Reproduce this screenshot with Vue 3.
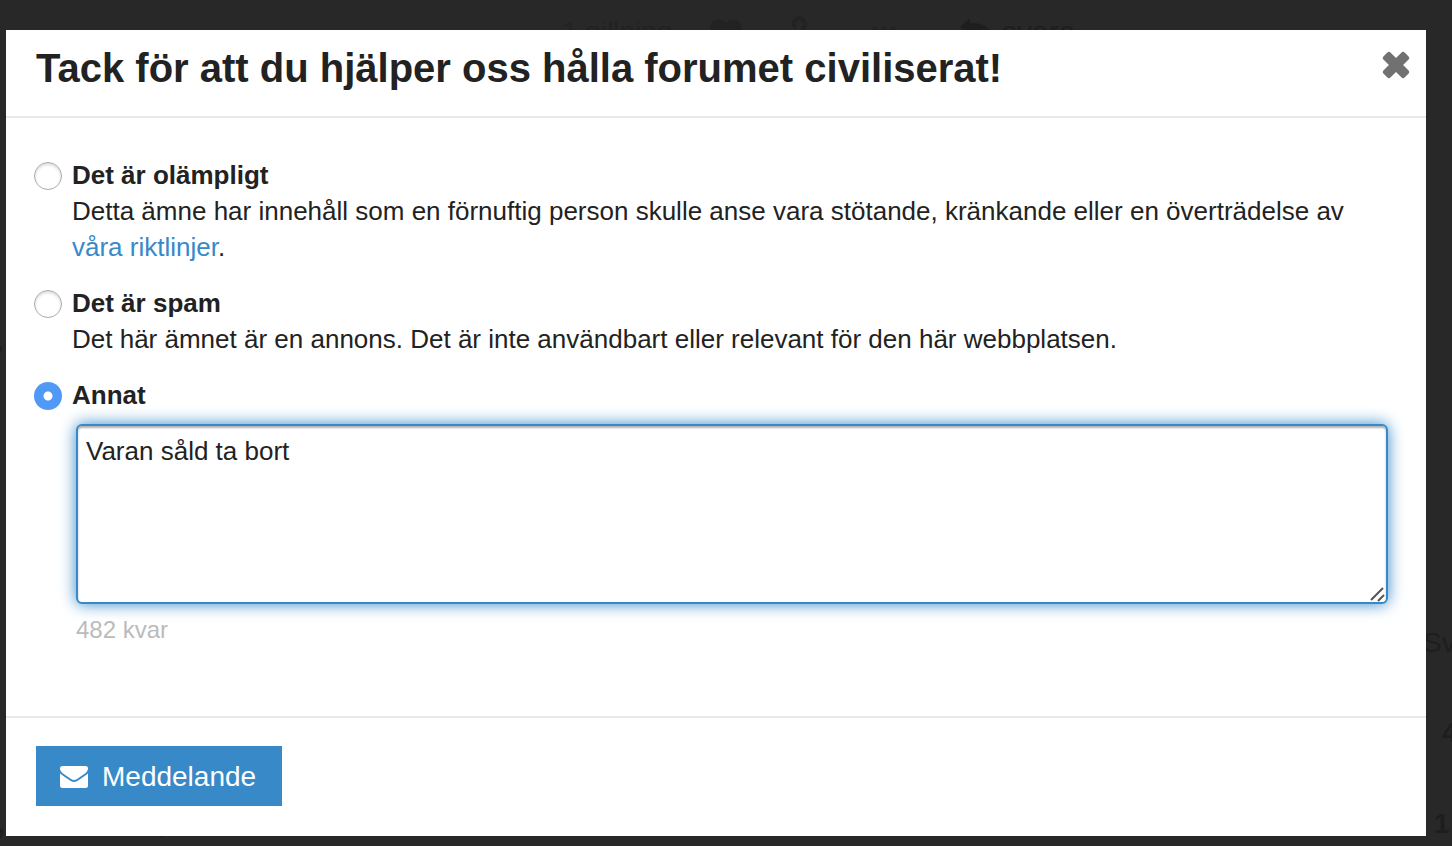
<script setup>
import { computed, ref } from 'vue'

const LIMIT = 500
const reason = ref('other')
const message = ref('Varan såld ta bort')
const remaining = computed(() => LIMIT - message.value.length)
</script>

<template>
  <div class="page">
    <div class="backdrop" aria-hidden="true">
      <span class="ghost likes">1 gillning</span>
      <svg class="ghost heart" width="32" height="28" viewBox="0 0 32 28">
        <path d="M16 27 3 15C-5 5 8-5 16 4c8-9 21 1 13 11z" />
      </svg>
      <svg class="ghost chain" width="20" height="30" viewBox="0 0 20 30">
        <path d="m6 13-2-3a3 3 0 0 1 0-3l3-3a4 4 0 0 1 5 0l3 4a3 3 0 0 1 0 3l-3 4" fill="none" stroke="currentColor" stroke-width="4" />
      </svg>
      <svg class="ghost dots" width="26" height="8" viewBox="0 0 26 8">
        <rect width="6" height="6" rx="2" /><rect x="9" width="6" height="6" rx="2" /><rect x="18" width="6" height="6" rx="2" />
      </svg>
      <svg class="ghost arrow" width="30" height="28" viewBox="0 0 30 28">
        <path d="M0 9 10 0v5c14 0 20 4 20 12 0 4-2 7-4 10 1-9-4-12-16-12v4z" />
      </svg>
      <span class="ghost reply">svara</span>
      <span class="ghost replies">Sv</span>
      <span class="ghost count-a">4</span>
      <span class="ghost count-b">1</span>
      <span class="ghost comma-a">,</span>
      <span class="ghost comma-b">,</span>
      <span class="ghost dot">•</span>
    </div>

    <form class="modal" role="dialog" aria-labelledby="flag-title" @submit.prevent>
      <header class="modal-header">
        <h1 id="flag-title">Tack för att du hjälper oss hålla forumet civiliserat!</h1>
        <button class="close" type="button" aria-label="Stäng">
          <svg width="28" height="28" viewBox="0 0 28 28">
            <g transform="rotate(45 14 14)">
              <rect x="-1" y="9" width="30" height="10" rx="2.500" />
              <rect x="9" y="-1" width="10" height="30" rx="2.500" />
            </g>
          </svg>
        </button>
      </header>

      <div class="modal-body">
        <div class="option">
          <input id="inappropriate" v-model="reason" type="radio" name="reason" value="inappropriate" />
          <div class="copy">
            <label for="inappropriate">Det är olämpligt</label>
            <p>Detta ämne har innehåll som en förnuftig person skulle anse vara stötande, kränkande eller en överträdelse av <a href="#riktlinjer">våra riktlinjer</a>.</p>
          </div>
        </div>
        <div class="option">
          <input id="spam" v-model="reason" type="radio" name="reason" value="spam" />
          <div class="copy">
            <label for="spam">Det är spam</label>
            <p>Det här ämnet är en annons. Det är inte användbart eller relevant för den här webbplatsen.</p>
          </div>
        </div>
        <div class="option">
          <input id="other" v-model="reason" type="radio" name="reason" value="other" />
          <div class="copy">
            <label for="other">Annat</label>
          </div>
        </div>
        <div class="message">
          <div class="field">
            <textarea v-model="message" aria-label="Annat" :maxlength="LIMIT" spellcheck="false"></textarea>
            <svg class="grip" width="16" height="16" viewBox="0 0 16 16" aria-hidden="true">
              <path d="M1 14 13 2M8 15 14 9" fill="none" stroke="currentColor" stroke-width="2" />
            </svg>
          </div>
          <div class="remaining">{{ remaining }} kvar</div>
        </div>
      </div>

      <footer class="modal-footer">
        <button class="submit" type="submit">
          <svg width="28" height="22" viewBox="0 0 28 22" aria-hidden="true">
            <path d="M2.500 0h23A2.500 2.500 0 0 1 28 2.500C28 4.700 26.500 6.300 25 7.400l-8 5.500q-3 2.200-6 0L3 7.400C1.500 6.300 0 4.700 0 2.500A2.500 2.500 0 0 1 2.500 0z" />
            <path d="M0 7.200Q.8 8.200 2 9l7.500 5.300q4.500 3.200 9 0L26 9q1.200-.8 2-1.800V19.500A2.500 2.500 0 0 1 25.500 22h-23A2.500 2.500 0 0 1 0 19.500z" />
          </svg>
          Meddelande
        </button>
      </footer>
    </form>
  </div>
</template>

<style>
body {
  margin: 0;
  background: #282828;
}
</style>

<style scoped>
.page {
  position: relative;
  box-sizing: border-box;
  min-height: 100vh;
  padding: 30px 26px 10px 6px;
  overflow: hidden;
  background: #282828;
  color: #222;
  font-family: "Liberation Sans", Arial, sans-serif;
  font-size: 26px;
  line-height: 36px;
}

.backdrop {
  position: absolute;
  inset: 0;
  overflow: hidden;
  color: #1e1e1e;
  font-size: 28px;
}

.ghost {
  position: absolute;
  white-space: nowrap;
}

svg {
  display: block;
  fill: currentColor;
}

.likes { left: 562px; top: 14px; color: #222; }
.heart { left: 710px; top: 19px; color: #222; }
.chain { left: 790px; top: 15px; color: #222; }
.dots { left: 872px; top: 27px; color: #222; }
.arrow { left: 960px; top: 18px; }
.reply { left: 1002px; top: 14px; font-size: 30px; }
.replies { left: 1423px; top: 625px; }
.count-a { left: 1442px; top: 715px; font-weight: bold; }
.count-b { left: 1434px; top: 806px; font-weight: bold; }
.comma-a { left: -3px; top: 806px; font-weight: bold; }
.comma-b { left: 158px; top: 807px; }
.dot { left: -7px; top: 331px; }

.modal {
  position: relative;
  background: #fff;
}

.modal-header {
  display: flex;
  align-items: flex-start;
  justify-content: space-between;
  padding: 14px 16px 24px 30px;
  border-bottom: 2px solid #e9e9e9;
}

h1 {
  margin: 0;
  font-size: 40px;
  line-height: 48px;
}

.close {
  padding: 0;
  margin-top: 7px;
  border: 0;
  background: none;
  color: #717171;
}

.modal-body {
  display: flex;
  flex-direction: column;
  gap: 20px;
  padding: 39px 38px 68px 28px;
}

.option {
  display: flex;
  gap: 10px;
}

input[type="radio"] {
  appearance: none;
  flex: none;
  box-sizing: border-box;
  width: 28px;
  height: 28px;
  margin: 5px 0 0;
  border: 1px solid #aaa;
  border-radius: 50%;
  background: #fff;
  box-shadow: inset 0 2px 3px #ddd;
}

input[type="radio"]:checked {
  border: 0;
  background: radial-gradient(circle, #fff 0 4px, #5199f6 5px);
  box-shadow: none;
}

.copy {
  flex: 1;
}

label {
  display: block;
  font-weight: bold;
}

p {
  margin: 0;
}

a {
  color: #3789c8;
  text-decoration: none;
}

.message {
  margin: -9px 0 0 42px;
}

.field {
  position: relative;
}

textarea {
  display: block;
  box-sizing: border-box;
  width: 100%;
  height: 180px;
  padding: 7px 8px;
  border: 2px solid #3789c8;
  border-radius: 6px;
  outline: 0;
  resize: none;
  background: #fff;
  box-shadow: inset 0 2px 2px rgba(0, 0, 0, 0.3), 0 0 16px #3789c8;
  color: #222;
  font: inherit;
}

.grip {
  position: absolute;
  right: 2px;
  bottom: 2px;
  color: #555;
}

.remaining {
  margin-top: 8px;
  color: #bbb;
  font-size: 24px;
}

.modal-footer {
  padding: 28px 30px 30px;
  border-top: 2px solid #e9e9e9;
}

.submit {
  display: flex;
  align-items: center;
  gap: 14px;
  height: 60px;
  padding: 2px 26px 0 24px;
  border: 0;
  background: #3789c8;
  color: #fff;
  font: inherit;
  font-size: 28px;
}
</style>
